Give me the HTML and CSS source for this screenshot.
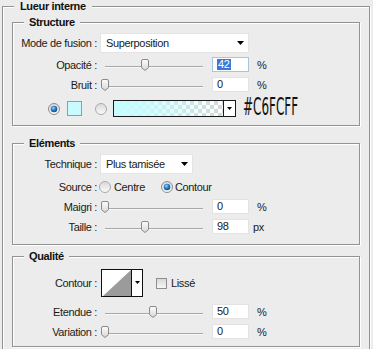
FILE: index.html
```html
<!DOCTYPE html>
<html lang="fr">
<head>
<meta charset="utf-8">
<title>Lueur interne</title>
<link rel="stylesheet" href="styles.css">
</head>
<body>
<svg class="defs" width="0" height="0" aria-hidden="true">
  <defs>
    <linearGradient id="gBtn" x1="0" y1="0" x2="0" y2="1"><stop offset="0" stop-color="#fdfdfd"/><stop offset="1" stop-color="#d6d6d6"/></linearGradient>
    <linearGradient id="gOff" x1="0" y1="0" x2="0" y2="1"><stop offset="0" stop-color="#d9d9d9"/><stop offset="1" stop-color="#fbfbfb"/></linearGradient>
    <radialGradient id="gDot" cx="0.4" cy="0.35" r="0.75"><stop offset="0" stop-color="#9ad6ff"/><stop offset="0.45" stop-color="#2b7fc8"/><stop offset="1" stop-color="#0c3d70"/></radialGradient>
    <symbol id="thumb" viewBox="0 0 8 12"><path d="M2 .5h4a1.5 1.5 0 0 1 1.5 1.5V8.6L4 11.5 .5 8.6V2A1.5 1.5 0 0 1 2 .5z" fill="url(#gBtn)" stroke="#8a8a8a"/></symbol>
    <symbol id="radio-on" viewBox="0 0 12 12"><circle cx="6" cy="6" r="5.5" fill="url(#gOff)" stroke="#8c8c8c"/><circle cx="6" cy="6" r="3.3" fill="url(#gDot)"/></symbol>
    <symbol id="radio-off" viewBox="0 0 12 12"><circle cx="6" cy="6" r="5.5" fill="url(#gOff)" stroke="#a9a9a9"/></symbol>
    <symbol id="arrow" viewBox="0 0 7 4"><path d="M0 0h7L3.5 4z" fill="#000"/></symbol>
  </defs>
</svg>

<fieldset class="group outer">
  <legend>Lueur interne</legend>

  <fieldset class="group sec sec-structure">
    <legend>Structure</legend>
    <div class="row h20">
      <span class="lbl">Mode de fusion :</span>
      <div class="select select-wide"><span>Superposition</span><svg class="arrow"><use href="#arrow"/></svg></div>
    </div>
    <div class="row h15 mt4">
      <span class="lbl">Opacité :</span>
      <div class="slider" style="--v:42"><span class="track"></span><svg class="thumb"><use href="#thumb"/></svg></div>
      <span class="num num-focus"><span class="hl">42</span></span>
      <span class="unit">%</span>
    </div>
    <div class="row h15 mt5">
      <span class="lbl">Bruit :</span>
      <div class="slider" style="--v:0"><span class="track"></span><svg class="thumb"><use href="#thumb"/></svg></div>
      <span class="num">0</span>
      <span class="unit">%</span>
    </div>
    <div class="row color-row">
      <svg class="radio"><use href="#radio-on"/></svg>
      <span class="swatch"></span>
      <svg class="radio radio-2"><use href="#radio-off"/></svg>
      <div class="gradbox"><span class="grad"></span><span class="dd"><svg class="arrow-sm"><use href="#arrow"/></svg></span></div>
      <span class="hex">#C6FCFF</span>
    </div>
  </fieldset>

  <fieldset class="group sec sec-elements">
    <legend>Eléments</legend>
    <div class="row h20">
      <span class="lbl">Technique :</span>
      <div class="select select-mid"><span>Plus tamisée</span><svg class="arrow"><use href="#arrow"/></svg></div>
    </div>
    <div class="row h15 mt5">
      <span class="lbl">Source :</span>
      <svg class="radio src-1"><use href="#radio-off"/></svg>
      <span class="opt">Centre</span>
      <svg class="radio src-2"><use href="#radio-on"/></svg>
      <span class="opt">Contour</span>
    </div>
    <div class="row h15 mt5">
      <span class="lbl">Maigri :</span>
      <div class="slider" style="--v:0"><span class="track"></span><svg class="thumb"><use href="#thumb"/></svg></div>
      <span class="num">0</span>
      <span class="unit">%</span>
    </div>
    <div class="row h15 mt5">
      <span class="lbl">Taille :</span>
      <div class="slider" style="--v:42"><span class="track"></span><svg class="thumb"><use href="#thumb"/></svg></div>
      <span class="num">98</span>
      <span class="unit unit-px">px</span>
    </div>
  </fieldset>

  <fieldset class="group sec sec-quality">
    <legend>Qualité</legend>
    <div class="row contour-row">
      <span class="lbl">Contour :</span>
      <div class="contour">
        <svg class="curve" viewBox="0 0 29 26" preserveAspectRatio="none"><path d="M1 26L29 0V26Z" fill="#9b9b9b"/></svg>
        <span class="dd"><svg class="arrow-sm"><use href="#arrow"/></svg></span>
      </div>
      <span class="check"></span>
      <span class="check-lbl">Lissé</span>
    </div>
    <div class="row h15 mt7">
      <span class="lbl">Etendue :</span>
      <div class="slider" style="--v:50"><span class="track"></span><svg class="thumb"><use href="#thumb"/></svg></div>
      <span class="num">50</span>
      <span class="unit">%</span>
    </div>
    <div class="row h15 mt5">
      <span class="lbl">Variation :</span>
      <div class="slider" style="--v:0"><span class="track"></span><svg class="thumb"><use href="#thumb"/></svg></div>
      <span class="num">0</span>
      <span class="unit">%</span>
    </div>
  </fieldset>
</fieldset>
</body>
</html>
```

FILE: styles.css
```css
* { box-sizing: border-box; }

html, body {
  margin: 0;
  height: 349px;
  overflow: hidden;
}

body {
  background: #ececec;
  font-family: "Liberation Sans", Arial, sans-serif;
  font-size: 11px;
  letter-spacing: -0.35px;
  color: #1a1a1a;
}

.defs {
  display: block;
  width: 0;
  height: 0;
}

/* etched group boxes */
.group {
  margin: 0;
  padding: 0;
  min-width: 0;
  border: 1px solid #939393;
  box-shadow: inset 1px 1px 0 #fff, 1px 1px 0 #fff;
}

.group > legend {
  font-weight: bold;
  line-height: 13px;
  padding: 0 5px;
  margin-left: 11px;
  background: #ececec;
  color: #111;
}

.outer {
  margin-left: 2px;
  width: 368px;
  padding: 3px 9px 2px;
}

.outer > legend {
  margin-left: 2px;
  padding: 0 6px;
}

.sec-structure { padding: 4px 0 8px; }
.sec-elements { margin-top: 11px; padding: 4px 0 10px; }
.sec-quality { margin-top: 5px; padding: 6px 0 7px; }

/* rows */
.row {
  display: flex;
  align-items: center;
}

.h20 { height: 20px; }
.h15 { height: 15px; }
.mt4 { margin-top: 4px; }
.mt5 { margin-top: 5px; }
.mt7 { margin-top: 7px; }

.lbl {
  flex: none;
  width: 84px;
  margin-right: 3px;
  text-align: right;
  white-space: nowrap;
}

/* select */
.select {
  flex: none;
  display: flex;
  align-items: center;
  height: 20px;
  padding-left: 5px;
  background: #fff;
  border: 1px solid #e4e4e4;
}

.select-wide { width: 149px; }
.select-mid { width: 93px; }

.arrow {
  width: 7px;
  height: 4px;
  margin-left: auto;
  margin-right: 4px;
}

/* slider */
.slider {
  flex: none;
  position: relative;
  width: 109px;
  height: 15px;
}

.track {
  position: absolute;
  left: 5px;
  top: 9px;
  width: 98px;
  height: 1px;
  background: #a8a8a8;
  box-shadow: 0 1px 0 #f8f8f8;
}

.thumb {
  position: absolute;
  top: 2px;
  left: calc(1px + var(--v) * 0.96px);
  width: 8px;
  height: 12px;
}

/* numeric fields */
.num {
  flex: none;
  width: 37px;
  height: 15px;
  margin-left: 3px;
  padding-left: 4px;
  line-height: 13px;
  background: #fff;
  border: 1px solid #e3e3e3;
}

.num-focus { border-color: #a9c3e3; }

.hl {
  display: inline-block;
  background: #3a78d6;
  color: #fff;
  line-height: 11px;
  padding: 0 1px;
}

.unit { margin-left: 8px; }
.unit-px { margin-left: 4px; }

/* radios */
.radio {
  flex: none;
  width: 12px;
  height: 12px;
}

.src-1 { margin-left: -1px; margin-right: 3px; }
.src-2 { margin-left: 16px; margin-right: 2px; }

/* colour row */
.color-row {
  height: 17px;
  margin-top: 8px;
  padding-left: 35px;
}

.swatch {
  flex: none;
  width: 15px;
  height: 15px;
  margin-left: 7px;
  background: #c6fcff;
  border: 1px solid #9a9a9a;
}

.radio-2 { margin-left: 13px; }

.gradbox {
  flex: none;
  display: flex;
  width: 123px;
  height: 17px;
  margin-left: 6px;
  border: 1px solid #1a1a1a;
}

.grad {
  flex: 1;
  background:
    linear-gradient(to right, #c6fcff 0%, rgba(198, 252, 255, 0.85) 30%, rgba(198, 252, 255, 0) 100%),
    repeating-conic-gradient(#d6d6d6 0 25%, #ffffff 0 50%) 0 0 / 8px 8px;
}

.dd {
  flex: none;
  display: flex;
  align-items: center;
  justify-content: center;
  width: 12px;
  background: #fff;
  border-left: 1px solid #1a1a1a;
}

.arrow-sm {
  width: 5px;
  height: 3px;
}

.hex {
  flex: none;
  margin-left: 7px;
  font-family: "DejaVu Sans", sans-serif;
  font-size: 25px;
  letter-spacing: 0;
  line-height: 20px;
  color: #111;
  display: inline-block;
  transform: translateY(-2px) scaleX(0.48);
  transform-origin: left center;
}

/* source options */
.opt { white-space: nowrap; }

/* quality */
.contour-row {
  height: 28px;
}

.contour {
  flex: none;
  display: flex;
  width: 42px;
  height: 28px;
  margin-left: 1px;
  background: #fff;
  border: 1px solid #111;
}

.curve {
  flex: none;
  width: 29px;
  height: 26px;
}

.contour .dd {
  width: 11px;
  border-left-color: #111;
  padding-bottom: 2px;
}

.check {
  flex: none;
  width: 11px;
  height: 11px;
  margin-left: 13px;
  border: 1px solid #8e8e8e;
  background: linear-gradient(#d8d8d8, #f7f7f7);
}

.check-lbl {
  margin-left: 4px;
}
```
